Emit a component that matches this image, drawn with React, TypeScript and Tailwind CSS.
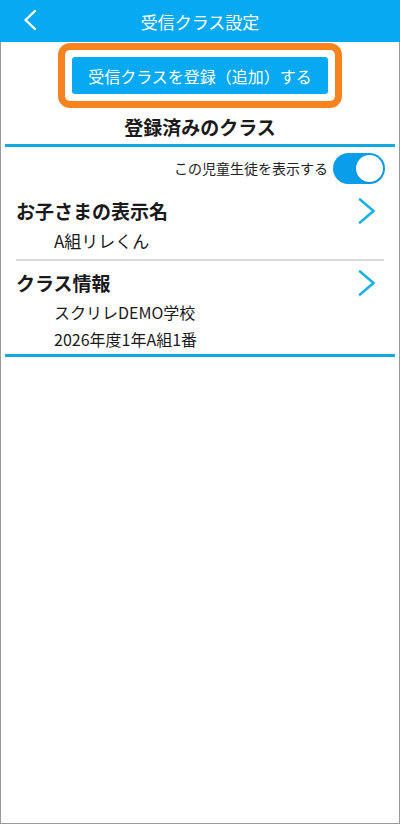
import React, { useState } from 'react';

const jp = { fontFamily: '"Noto Sans CJK JP", "Noto Sans", sans-serif' };

function Chevron() {
  return (
    <svg width="18" height="26" viewBox="0 0 18 26" fill="none" className="shrink-0">
      <path d="M2 1.5 L15.5 13 L2 24.5" stroke="#19b2e6" strokeWidth={2.6} strokeLinecap="round" strokeLinejoin="round" />
    </svg>
  );
}

export default function App() {
  const [visible, setVisible] = useState(true);

  return (
    <div className="w-[400px] h-[824px] flex flex-col bg-white text-[#1a1a1a]" style={jp}>
      {/* Header */}
      <div className="h-[42px] shrink-0 bg-[#07a9f2] flex items-center relative">
        <button className="absolute left-[22px] top-[9px] w-[18px] h-[22px]">
          <svg width="16" height="22" viewBox="0 0 16 22" fill="none">
            <path d="M13 2 L3.5 11 L13 20" stroke="white" strokeWidth={2.4} strokeLinecap="round" strokeLinejoin="round" />
          </svg>
        </button>
        <h1 className="flex-1 text-center text-white text-[17px] leading-none">受信クラス設定</h1>
      </div>

      {/* Body */}
      <div className="flex-1 flex flex-col border-x-[1.5px] border-b-[1.5px] border-[#9a9a9a]">
        <div className="flex justify-center pt-[1px]">
          <div className="w-[284px] h-[65px] rounded-[12px] border-[7px] border-[#f7831f] p-[7px]">
            <button className="w-full h-full rounded-[3px] bg-[#07a9f2] text-white text-[16px] flex items-center justify-center">
              受信クラスを登録（追加）する
            </button>
          </div>
        </div>

        <h2 className="text-center font-bold text-[19px] leading-none mt-[9px]">登録済みのクラス</h2>
        <div className="mx-[4px] h-[3px] bg-[#12a9e3] mt-[8px]" />

        <div className="flex items-center justify-end gap-[5px] pr-[14px] pt-[6px]">
          <span className="text-[14px] text-[#222]">この児童生徒を表示する</span>
          <button
            onClick={() => setVisible(v => !v)}
            className={`w-[52px] h-[31px] rounded-full p-[2px] flex ${visible ? 'bg-[#0a9eea] justify-end' : 'bg-gray-300 justify-start'}`}
          >
            <span className="w-[27px] h-[27px] rounded-full bg-white shadow" />
          </button>
        </div>

        <div className="px-[15px]">
          <div className="h-[40px] flex items-center justify-between mt-[7px]">
            <span className="font-bold text-[19px]">お子さまの表示名</span>
            <span className="mr-[8px]"><Chevron /></span>
          </div>
          <div className="pl-[38px] text-[17px] leading-[20px]">A組リレくん</div>
          <div className="h-[2px] bg-[#dcdcdc] mt-[8px]" />

          <div className="h-[40px] flex items-center justify-between mt-[2px]">
            <span className="font-bold text-[19px]">クラス情報</span>
            <span className="mr-[8px]"><Chevron /></span>
          </div>
          <div className="pl-[38px] text-[16px] leading-[24px] -mt-[3px]">スクリレDEMO学校</div>
          <div className="pl-[38px] text-[16px] leading-[24px] mt-[3px]">2026年度1年A組1番</div>
        </div>
        <div className="mx-[4px] h-[3px] bg-[#12a9e3] mt-[3px]" />
      </div>
    </div>
  );
}
